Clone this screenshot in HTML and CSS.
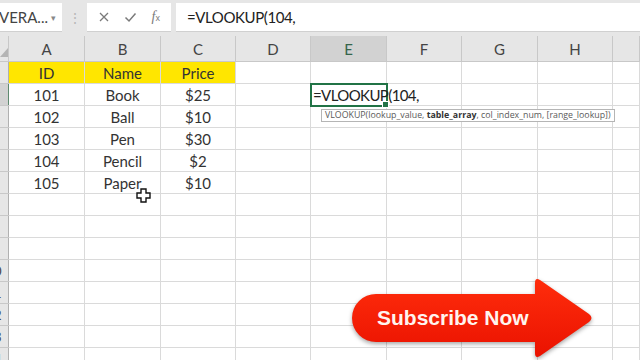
FILE: index.html
```html
<!DOCTYPE html>
<html lang="en">
<head>
    <meta charset="UTF-8">
    <meta name="viewport" content="width=device-width, initial-scale=1.0">
    <title>VLOOKUP</title>
    <link rel="stylesheet" href="styles.css">
</head>
<body>
    <div class="formula-bar">
        <div class="name-box">
            <span class="name">VERA...</span>
            <span class="drop">&#9662;</span>
        </div>
        <div class="grip">&#8942;</div>
        <div class="fx-buttons">
            <svg class="icon" width="12" height="12" viewBox="0 0 12 12"><path d="M2 2 L10 10 M10 2 L2 10" stroke="#7a7a7a" stroke-width="1.3" fill="none"/></svg>
            <svg class="icon" width="13" height="12" viewBox="0 0 13 12"><path d="M1.5 6.5 L5 10 L11.5 2.5" stroke="#7a7a7a" stroke-width="1.5" fill="none"/></svg>
            <span class="fx"><i>f</i><small>x</small></span>
        </div>
        <div class="formula-input">=VLOOKUP(104,</div>
    </div>

    <div class="sheet-wrap">
        <table class="sheet">
            <thead>
                <tr>
                    <th class="corner"><span class="tri"></span></th>
                    <th class="w76">A</th>
                    <th class="w76">B</th>
                    <th class="w75">C</th>
                    <th class="w75">D</th>
                    <th class="w76 selected">E</th>
                    <th class="w75">F</th>
                    <th class="w76">G</th>
                    <th class="w75">H</th>
                    <th class="rest"></th>
                </tr>
            </thead>
            <tbody>
                <tr>
                    <th></th>
                    <td class="head">ID</td><td class="head">Name</td><td class="head">Price</td>
                    <td></td><td></td><td></td><td></td><td></td><td></td>
                </tr>
                <tr>
                    <th class="active-row"></th>
                    <td>101</td><td>Book</td><td>$25</td><td></td>
                    <td class="active">
                        <span class="typing">=VLOOKUP(104,</span>
                        <div class="tip">VLOOKUP(lookup_value, <b>table_array</b>, col_index_num, [range_lookup])</div>
                    </td>
                    <td></td><td></td><td></td><td></td>
                </tr>
                <tr>
                    <th></th>
                    <td>102</td><td>Ball</td><td>$10</td>
                    <td></td><td></td><td></td><td></td><td></td><td></td>
                </tr>
                <tr>
                    <th></th>
                    <td>103</td><td>Pen</td><td>$30</td>
                    <td></td><td></td><td></td><td></td><td></td><td></td>
                </tr>
                <tr>
                    <th></th>
                    <td>104</td><td>Pencil</td><td>$2</td>
                    <td></td><td></td><td></td><td></td><td></td><td></td>
                </tr>
                <tr>
                    <th></th>
                    <td>105</td><td>Paper</td><td>$10</td>
                    <td></td><td></td><td></td><td></td><td></td><td></td>
                </tr>
                <tr><th></th><td></td><td></td><td></td><td></td><td></td><td></td><td></td><td></td><td></td></tr>
                <tr><th></th><td></td><td></td><td></td><td></td><td></td><td></td><td></td><td></td><td></td></tr>
                <tr><th></th><td></td><td></td><td></td><td></td><td></td><td></td><td></td><td></td><td></td></tr>
                <tr><th><div class="rh"><span>10</span></div></th><td></td><td></td><td></td><td></td><td></td><td></td><td></td><td></td><td></td></tr>
                <tr><th><div class="rh"><span>11</span></div></th><td></td><td></td><td></td><td></td><td></td><td></td><td></td><td></td><td></td></tr>
                <tr><th><div class="rh"><span>12</span></div></th><td></td><td></td><td></td><td></td><td></td><td></td><td></td><td></td><td></td></tr>
                <tr><th><div class="rh"><span>13</span></div></th><td></td><td></td><td></td><td></td><td></td><td></td><td></td><td></td><td></td></tr>
                <tr><th><div class="rh"><span>14</span></div></th><td></td><td></td><td></td><td></td><td></td><td></td><td></td><td></td><td></td></tr>
            </tbody>
        </table>

        <!-- mouse cursor over B6 -->
        <svg class="cursor" width="15" height="15" viewBox="0 0 15 15">
            <path d="M5 1 H10 V5 H14 V10 H10 V14 H5 V10 H1 V5 H5 Z" fill="#fff" stroke="#111" stroke-width="1.4"/>
        </svg>

        <a class="subscribe" href="#">
            <svg class="arrow" width="250" height="86" viewBox="0 0 250 86">
                <defs>
                    <linearGradient id="red" x1="0" y1="0" x2="0" y2="1">
                        <stop offset="0" stop-color="#ff2d0c"/>
                        <stop offset="1" stop-color="#ea1200"/>
                    </linearGradient>
                </defs>
                <path d="M26 17 L185 17 L185 6 Q185 0 190 3 L239 37 Q244 41 239 45 L190 79 Q185 82 185 76 L185 65 L26 65 A24 24 0 0 1 26 17 Z" fill="url(#red)"/>
            </svg>
            <span class="label">Subscribe Now</span>
        </a>
    </div>
</body>
</html>
```

FILE: styles.css
```css
body {
    margin: 0;
    width: 640px;
    height: 360px;
    overflow: hidden;
    background-color: #fff;
    font-family: Lato, "Open Sans", sans-serif;
    color: #333;
}

/* formula bar */

.formula-bar {
    display: flex;
    align-items: stretch;
    height: 29px;
    padding: 3px 0 4px;
    background-color: #e6e6e6;
}

.name-box {
    width: 62px;
    display: flex;
    align-items: center;
    justify-content: space-between;
    background-color: #fff;
    border-bottom: 1px solid #d0d0d0;
    box-sizing: border-box;
    overflow: hidden;
}

.name-box .name {
    font-size: 15px;
    margin-left: -1px;
    color: #444;
}

.name-box .drop {
    font-size: 9px;
    color: #888;
    margin-right: 6px;
}

.grip {
    width: 25px;
    display: flex;
    align-items: center;
    justify-content: center;
    color: #b8b8b8;
    font-size: 14px;
}

.fx-buttons {
    width: 84px;
    display: flex;
    align-items: center;
    justify-content: space-around;
    padding: 0 4px;
    box-sizing: border-box;
    background-color: #fff;
    border-bottom: 1px solid #d0d0d0;
}

.fx {
    color: #7a7a7a;
    font-family: "Liberation Serif", serif;
    font-size: 14px;
}

.fx small {
    font-family: "Liberation Sans", sans-serif;
    font-size: 9px;
}

.formula-input {
    flex: 1;
    margin-left: 5px;
    padding-left: 11px;
    display: flex;
    align-items: center;
    background-color: #fff;
    border-bottom: 1px solid #d0d0d0;
    font-size: 15px;
    letter-spacing: -0.4px;
    color: #222;
}

/* sheet */

.sheet-wrap {
    position: relative;
}

.sheet {
    border-collapse: collapse;
    table-layout: fixed;
    width: 640px;
    font-size: 15px;
}

.sheet th, .sheet td {
    padding: 0;
    border: 1px solid #dadada;
    white-space: nowrap;
}

.sheet thead th {
    height: 25px;
    background-color: #e6e6e6;
    border-color: #c8c8c8;
    border-top: none;
    font-weight: normal;
    color: #444;
}

.sheet thead th.selected {
    background-color: #d2d2d2;
    color: #35644a;
}

.w76 { width: 75px; }
.w75 { width: 74px; }
.rest { width: 26px; }

.sheet .corner {
    width: 8px;
    position: relative;
    border-left: none;
}

.corner .tri {
    position: absolute;
    left: 0;
    bottom: 4px;
    width: 0;
    height: 0;
    border-left: 8px solid transparent;
    border-bottom: 9px solid #b4b4b4;
}

.sheet tbody td, .sheet tbody th {
    height: 21px;
}

.sheet tbody th {
    background-color: #e6e6e6;
    border-color: #c8c8c8;
    border-left: none;
    border-right: 1px solid #b0b0b0;
    font-weight: normal;
    font-size: 13px;
    color: #444;
}

.sheet tbody th.active-row {
    background-color: #d2d2d2;
    border-right: 1px solid #5f8a70;
}

.rh {
    width: 8px;
    display: flex;
    justify-content: flex-end;
    overflow: hidden;
}

.rh span {
    flex: none;
    width: 28px;
    text-align: center;
}

.sheet td {
    text-align: center;
    line-height: 20px;
    vertical-align: bottom;
}

.sheet td.head {
    background-color: #ffe600;
}

.sheet td.active {
    position: relative;
    text-align: left;
    outline: 2px solid #217346;
    outline-offset: -1px;
}

.active .typing {
    position: relative;
    z-index: 1;
    padding-left: 2px;
    letter-spacing: -0.6px;
    color: #222;
}

.active::after {
    content: "";
    position: absolute;
    right: -3px;
    bottom: -3px;
    width: 5px;
    height: 5px;
    background-color: #217346;
    border: 1px solid #fff;
}

.tip {
    position: absolute;
    left: 10px;
    top: 25px;
    z-index: 2;
    padding: 0 3px;
    background-color: #fff;
    border: 1px solid #b5b5b5;
    font-family: "Open Sans", sans-serif;
    font-size: 8.8px;
    line-height: 11px;
    color: #5a5a5a;
}

.tip b {
    color: #333;
}

.cursor {
    position: absolute;
    left: 136px;
    top: 152px;
}

/* subscribe arrow */

.subscribe {
    position: absolute;
    left: 350px;
    top: 241px;
    width: 250px;
    height: 86px;
    display: flex;
    align-items: center;
    text-decoration: none;
}

.subscribe .arrow {
    position: absolute;
    left: 0;
    top: 0;
    filter: drop-shadow(0 2px 2px rgba(0, 0, 0, 0.35));
}

.subscribe .label {
    position: relative;
    margin-left: 27px;
    margin-top: -4px;
    font-family: "Liberation Sans", Arial, sans-serif;
    font-weight: bold;
    font-size: 21px;
    color: #fff4ef;
}
```
